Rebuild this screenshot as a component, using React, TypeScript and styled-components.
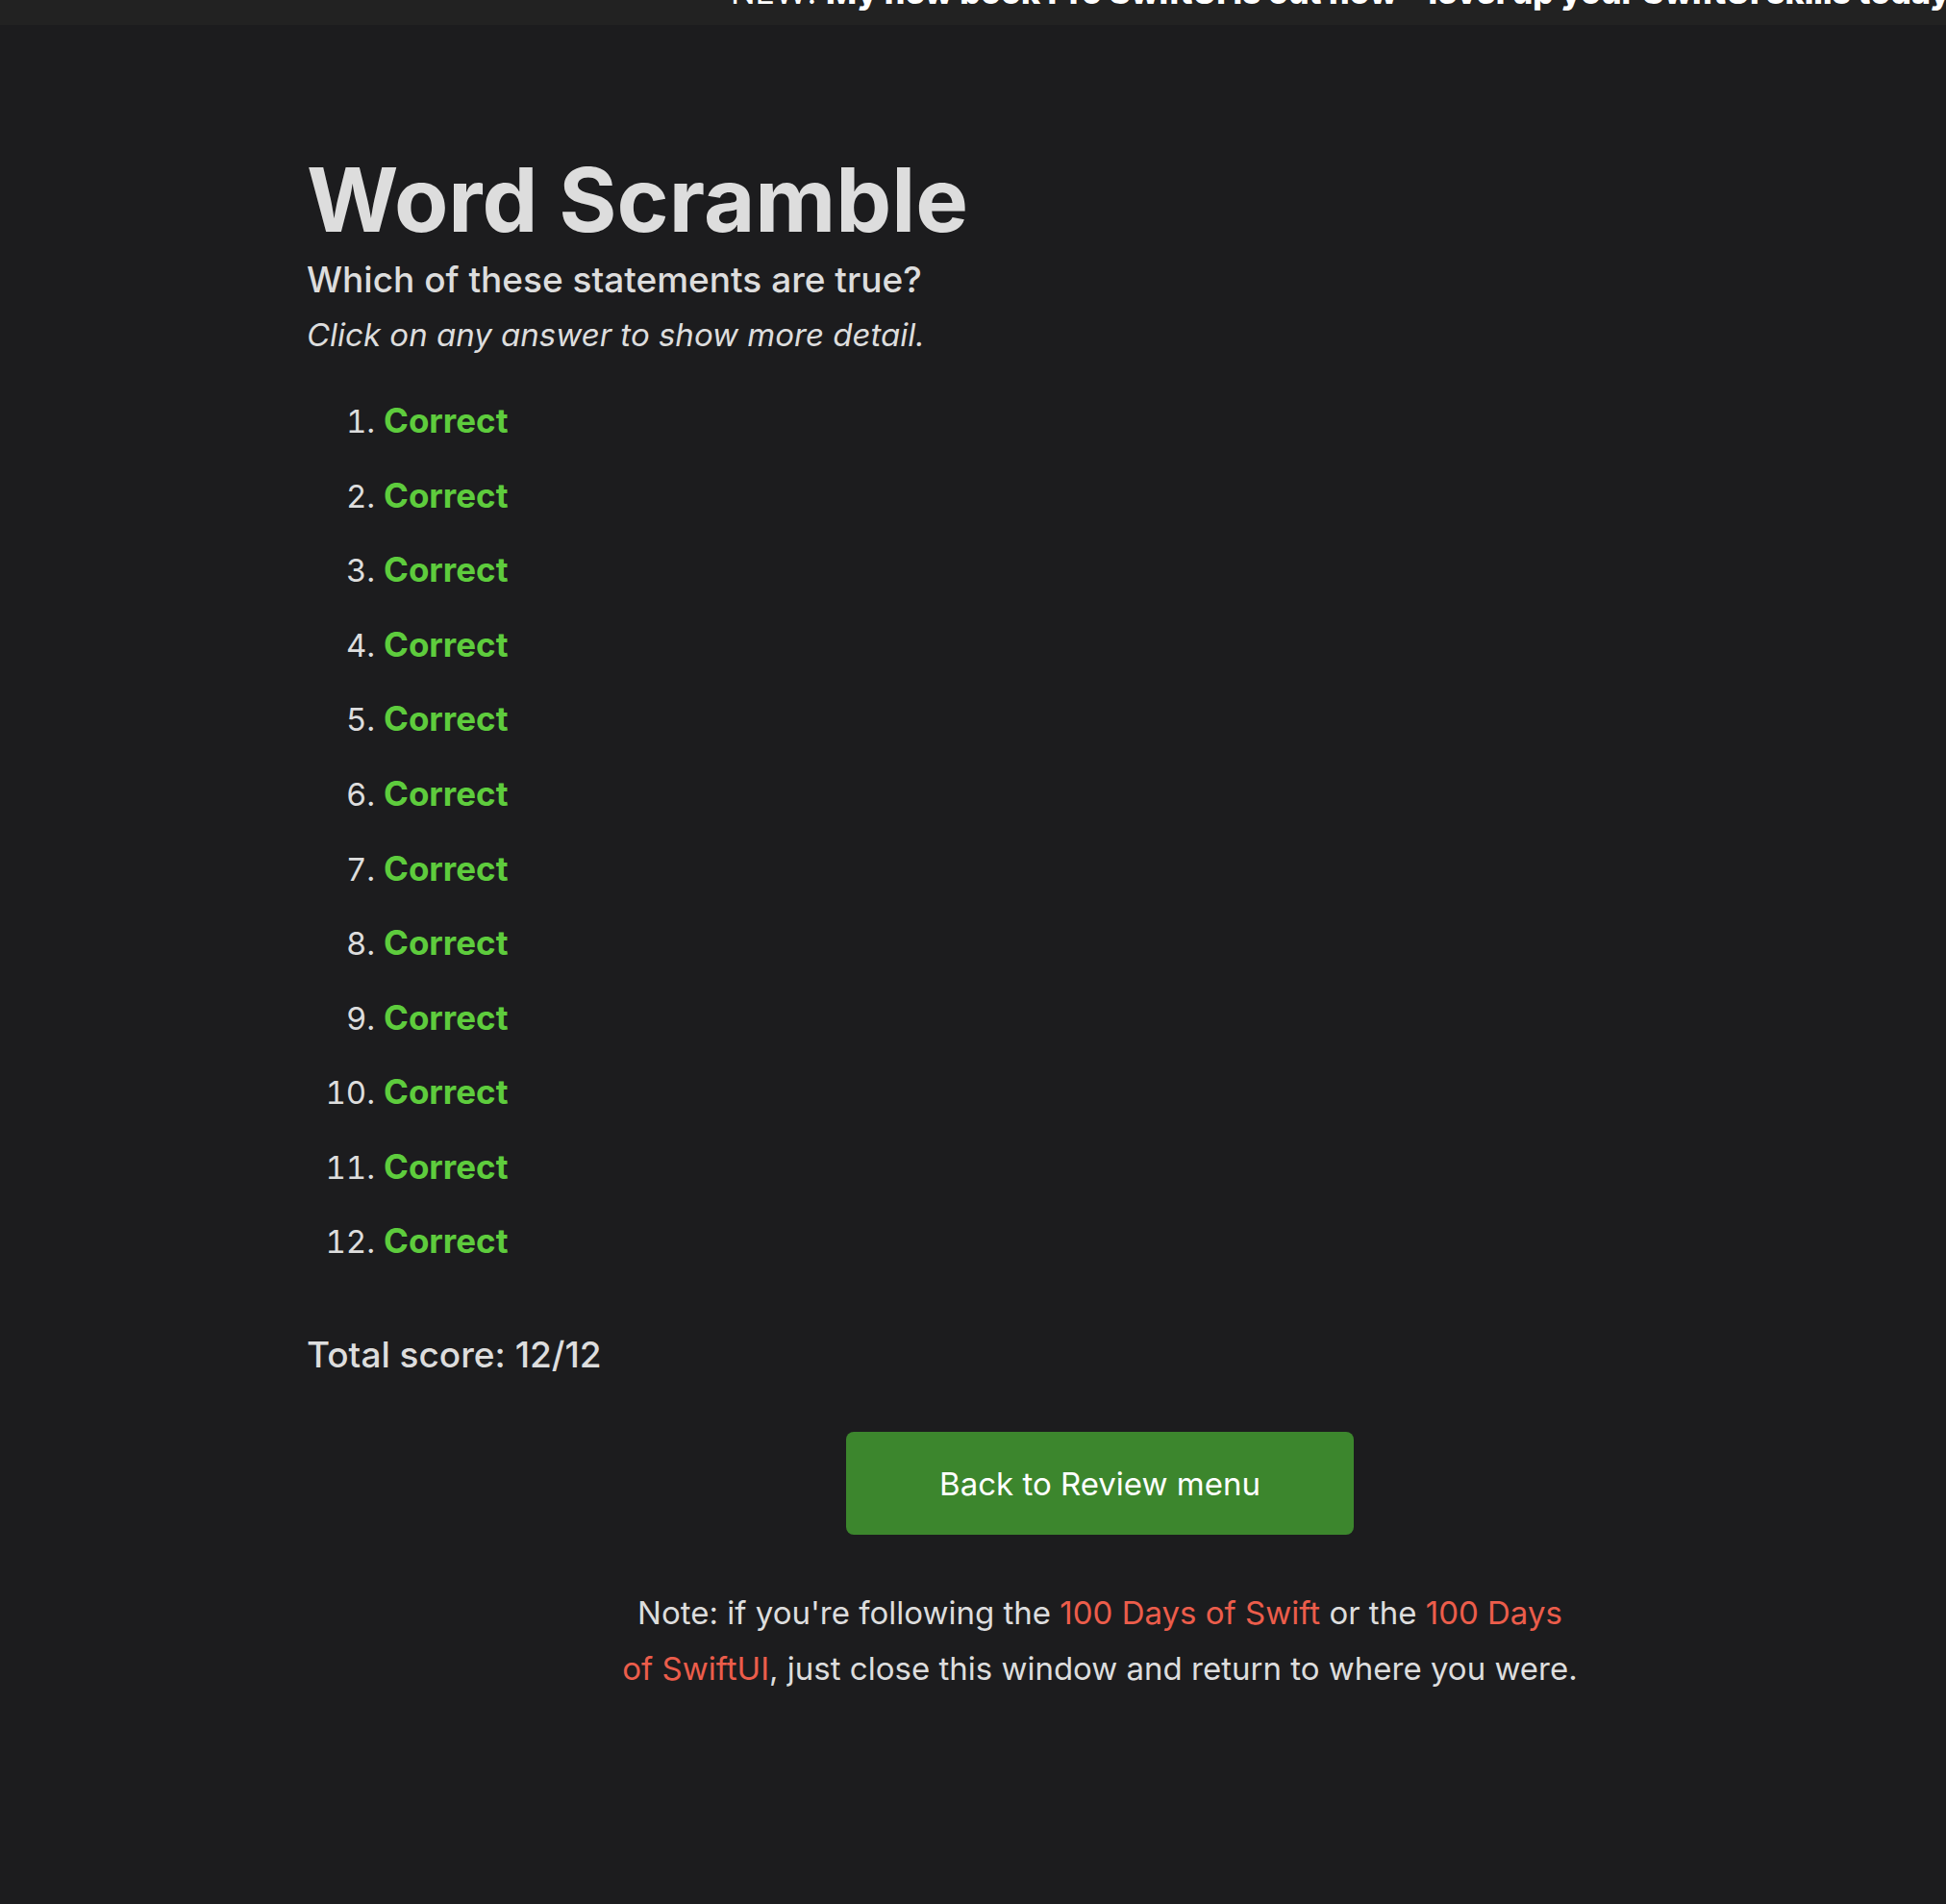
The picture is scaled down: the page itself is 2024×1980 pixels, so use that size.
import React from "react";
import styled, { createGlobalStyle } from "styled-components";

const GlobalStyle = createGlobalStyle`
  *, *::before, *::after {
    box-sizing: border-box;
  }

  html {
    background: #1c1c1e;
  }

  body {
    margin: 0;
    overflow-x: hidden;
    background: #1c1c1e;
    color: #dddddd;
    font-family: Inter, "Liberation Sans", sans-serif;
    font-size: 33px;
    line-height: 58px;
  }
`;

const Banner = styled.aside`
  display: flex;
  align-items: flex-end;
  height: 26px;
  padding: 0 0 5px 760px;
  overflow: hidden;
  background: #222222;
`;

const BannerLink = styled.a`
  flex: none;
  color: #ffffff;
  font-size: 34px;
  text-decoration: none;
  white-space: nowrap;

  strong {
    font-weight: 800;
  }
`;

const Page = styled.main`
  display: flex;
  flex-direction: column;
  padding: 134px 55px 200px 319px;
`;

const Title = styled.h1`
  margin: 0 0 7px;
  font-size: 92px;
  font-weight: 700;
  line-height: 96px;
`;

const Subtitle = styled.h2`
  margin: 0;
  font-size: 37px;
  font-weight: 500;
  line-height: 56px;
`;

const Hint = styled.p`
  margin: 0;
  font-style: italic;
`;

const Answers = styled.ol`
  display: grid;
  grid-auto-rows: 1fr;
  min-height: 931px;
  margin: 31px 0 42px;
  padding: 0 0 0 80px;
`;

const AnswerToggle = styled.button`
  padding: 0;
  border: 0;
  background: none;
  color: #5ecc3d;
  font: inherit;
  font-size: 35px;
  font-weight: 700;
  cursor: pointer;
`;

const Footer = styled.footer`
  display: flex;
  flex-direction: column;
  align-items: center;
  gap: 52px;
  margin-top: 52px;
`;

const BackLink = styled.a`
  padding: 25px 97px 24px;
  border-radius: 8px;
  background: #3c862d;
  color: #ffffff;
  text-decoration: none;
`;

const Note = styled.p`
  max-width: 1000px;
  margin: 0;
  text-align: center;
`;

const NoteLink = styled.a`
  color: #ec5d4b;
  text-decoration: none;
`;

const answers: string[] = Array.from({ length: 12 }, () => "Correct");

export default function App() {
  const score = answers.filter((answer) => answer === "Correct").length;

  return (
    <>
      <GlobalStyle />
      <Banner>
        <BannerLink href="#pro-swiftui">
          NEW!{" "}
          <strong>My new book Pro SwiftUI is out now – level up your SwiftUI skills today!</strong>
        </BannerLink>
      </Banner>
      <Page>
        <Title>Word Scramble</Title>
        <Subtitle>Which of these statements are true?</Subtitle>
        <Hint>Click on any answer to show more detail.</Hint>
        <Answers>
          {answers.map((answer, index) => (
            <li key={index}>
              <AnswerToggle type="button">{answer}</AnswerToggle>
            </li>
          ))}
        </Answers>
        <Subtitle as="h3">
          Total score: {score}/{answers.length}
        </Subtitle>
        <Footer>
          <BackLink href="#review">Back to Review menu</BackLink>
          <Note>
            Note: if you're following the <NoteLink href="#100-swift">100 Days of Swift</NoteLink> or the{" "}
            <NoteLink href="#100-swiftui">100 Days of SwiftUI</NoteLink>, just close this window and return to
            where you were.
          </Note>
        </Footer>
      </Page>
    </>
  );
}
